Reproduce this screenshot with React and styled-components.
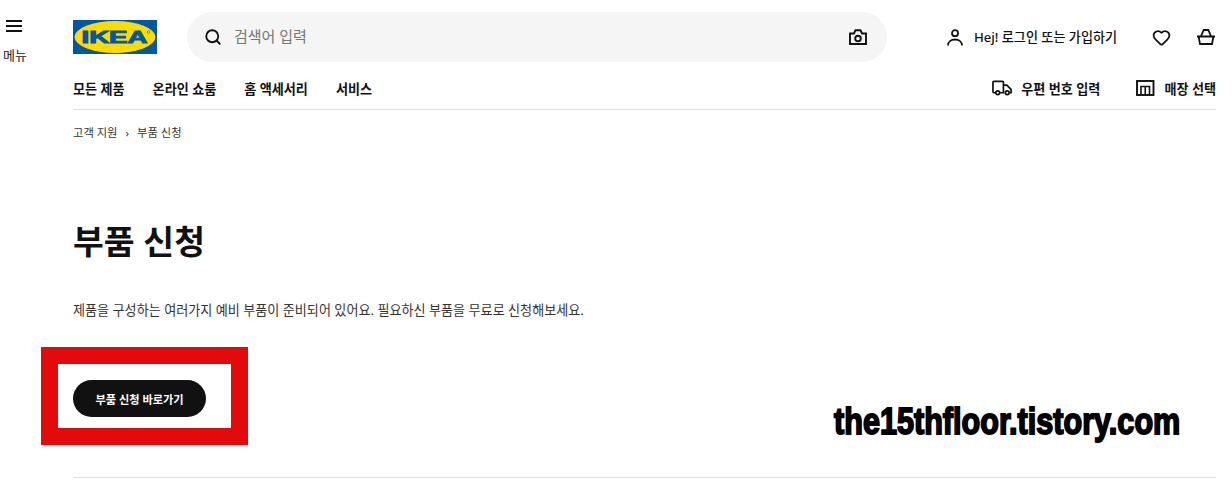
import React from 'react';
import styled, { createGlobalStyle } from 'styled-components';
import { Search, Heart } from 'lucide-react';

const GlobalStyle = createGlobalStyle`
  html, body {
    margin: 0;
    padding: 0;
    background: #fff;
    overflow: hidden;
  }
  body {
    font-family: "Noto Sans", "Noto Sans CJK KR", sans-serif;
    color: #111;
  }
`;

const Page = styled.div`
  width: 1216px;
  height: 480px;
  display: grid;
  grid-template-columns: 73px 1fr;
`;

const MenuColumn = styled.div`
  display: flex;
  flex-direction: column;
  padding: 19px 0 0 3px;
`;

const MenuIcon = styled.svg`
  width: 16px;
  height: 14px;
  margin-left: 3px;
`;

const MenuLabel = styled.span`
  margin-top: 13px;
  font-size: 13px;
  line-height: 18px;
  color: #222;
`;

const Content = styled.div`
  position: relative;
  display: flex;
  flex-direction: column;
`;

const TopRow = styled.div`
  display: flex;
  align-items: center;
  height: 50px;
  margin-top: 12px;
`;

const Logo = styled.svg`
  width: 84px;
  height: 34px;
  flex-shrink: 0;
  margin-top: -1px;
`;

const SearchBar = styled.div`
  width: 700px;
  height: 50px;
  margin-left: 30px;
  border-radius: 25px;
  background: #f5f5f5;
  display: flex;
  align-items: center;
  padding: 0 20px 0 17px;
  box-sizing: border-box;
`;

const Placeholder = styled.span`
  flex: 1;
  margin-left: 12px;
  padding-bottom: 4px;
  font-size: 15px;
  color: #767676;
`;

const Account = styled.div`
  display: flex;
  align-items: center;
  margin-left: 60px;
  font-size: 13.1px;
  font-weight: 500;
  white-space: nowrap;
`;

const AccountText = styled.span`
  margin-left: 11px;
  padding-bottom: 2px;
`;

const IconButton = styled.span`
  display: flex;
  margin-left: ${p => p.$gap}px;
`;

const NavRow = styled.div`
  display: flex;
  align-items: center;
  height: 48px;
  padding-top: 5px;
  border-bottom: 1px solid #dfdfdf;
  box-sizing: border-box;
`;

const NavLink = styled.span`
  font-size: 13.1px;
  font-weight: 700;
  margin-right: 28px;
  white-space: nowrap;
`;

const NavSpacer = styled.div`
  flex: 1;
`;

const NavTool = styled.span`
  display: flex;
  align-items: center;
  gap: 9px;
  margin-left: 36px;
  font-size: 13.1px;
  font-weight: 700;
  white-space: nowrap;
`;

const Breadcrumb = styled.div`
  display: flex;
  align-items: center;
  gap: 8px;
  height: 18px;
  margin-top: 13px;
  font-size: 11.3px;
  color: #333;
`;

const Title = styled.h1`
  margin: 75px 0 0;
  font-size: 33.5px;
  line-height: 50px;
  font-weight: 700;
  color: #111;
`;

const Lead = styled.p`
  margin: 34px 0 0;
  font-size: 13.1px;
  line-height: 20px;
  color: #333;
`;

const Highlight = styled.div`
  width: 207px;
  height: 98px;
  margin: 27px 0 0 -32px;
  border: 17px solid #e20a0a;
  box-sizing: border-box;
  padding: 16px 0 0 15px;
`;

const Button = styled.div`
  width: 133px;
  height: 37px;
  border-radius: 19px;
  background: #111;
  color: #fff;
  font-size: 11.2px;
  font-weight: 700;
  display: flex;
  align-items: center;
  justify-content: center;
  white-space: nowrap;
`;

const Divider = styled.div`
  height: 1px;
  background: #dfdfdf;
  margin-top: 32px;
`;

const Watermark = styled.div`
  position: absolute;
  left: 761px;
  top: 400px;
  font-family: "Liberation Sans", sans-serif;
  font-size: 36px;
  line-height: 44px;
  font-weight: 700;
  color: #000;
  -webkit-text-stroke: 1.8px #000;
  white-space: nowrap;
  transform: scaleX(0.85);
  transform-origin: left center;
`;

const CameraIcon = () => (
  <svg width="18" height="16" viewBox="0 0 18 16" fill="none" stroke="#111" strokeWidth="1.9">
    <path d="M1 4.5h4L6.5 1.2h5L13 4.5h4V15H1z" />
    <circle cx="9" cy="9.5" r="2.8" />
  </svg>
);

const UserIcon = () => (
  <svg width="16" height="17" viewBox="0 0 16 17" fill="none" stroke="#111" strokeWidth="1.8">
    <circle cx="8" cy="4.2" r="3" />
    <path d="M1 16.5c0-3.8 3-6 7-6s7 2.2 7 6" />
  </svg>
);

const BasketIcon = () => (
  <svg width="18" height="16" viewBox="0 0 18 16" fill="none" stroke="#111" strokeWidth="1.8">
    <path d="M0 7.5h18M3.800 7.5 6.700 1h4.600l2.900 6.500M1.600 7.5 3 15h12l1.400-7.500" />
  </svg>
);

const TruckIcon = () => (
  <svg width="20" height="16" viewBox="0 0 21 16" fill="none" stroke="#111" strokeWidth="1.8">
    <path d="M3.500 13H2a1 1 0 0 1-1-1V2a1 1 0 0 1 1-1h9a1 1 0 0 1 1 1v11H8.500" />
    <path d="M12 5h3.500l4.500 4.500V13h-1.500" />
    <circle cx="6" cy="13" r="2" />
    <circle cx="16" cy="13" r="2" />
  </svg>
);

const StoreIcon = () => (
  <svg width="19" height="16" viewBox="0 0 19 16" fill="none" stroke="#111" strokeWidth="1.9">
    <rect x="1" y="1" width="16.5" height="14" />
    <path d="M5 15V6.500h8.500V15M9.250 6.500V15" strokeWidth="1.6" />
  </svg>
);

const App = () => {
  return (
    <>
      <GlobalStyle />
      <Page>
        <MenuColumn>
          <MenuIcon viewBox="0 0 16 14" fill="none" stroke="#111" strokeWidth="2">
            <path d="M0 2h16M0 7h16M0 12h16" />
          </MenuIcon>
          <MenuLabel>메뉴</MenuLabel>
        </MenuColumn>

        <Content>
          <TopRow>
            <Logo viewBox="0 0 84 34">
              <rect width="84" height="34" fill="#0058a3" />
              <ellipse cx="42" cy="17" rx="40.5" ry="16" fill="#ffdb00" />
              <text
                x="8.5"
                y="23"
                textLength="66"
                lengthAdjust="spacingAndGlyphs"
                fontFamily="'Liberation Sans', sans-serif"
                fontWeight="700"
                fontSize="17"
                fill="#0058a3"
                stroke="#0058a3"
                strokeWidth="1"
              >
                IKEA
              </text>
              <circle cx="75.5" cy="12" r="1.3" fill="none" stroke="#0058a3" strokeWidth="0.5" />
            </Logo>

            <SearchBar>
              <Search size={18} color="#111" strokeWidth={2.4} />
              <Placeholder>검색어 입력</Placeholder>
              <CameraIcon />
            </SearchBar>

            <Account>
              <UserIcon />
              <AccountText>Hej! 로그인 또는 가입하기</AccountText>
            </Account>
            <IconButton $gap={35}>
              <Heart size={19} color="#111" strokeWidth={2.2} />
            </IconButton>
            <IconButton $gap={26}>
              <BasketIcon />
            </IconButton>
          </TopRow>

          <NavRow>
            <NavLink>모든 제품</NavLink>
            <NavLink>온라인 쇼룸</NavLink>
            <NavLink>홈 액세서리</NavLink>
            <NavLink>서비스</NavLink>
            <NavSpacer />
            <NavTool>
              <TruckIcon />
              우편 번호 입력
            </NavTool>
            <NavTool>
              <StoreIcon />
              매장 선택
            </NavTool>
          </NavRow>

          <Breadcrumb>
            <span>고객 지원</span>
            <span>›</span>
            <span>부품 신청</span>
          </Breadcrumb>

          <Title>부품 신청</Title>
          <Lead>제품을 구성하는 여러가지 예비 부품이 준비되어 있어요. 필요하신 부품을 무료로 신청해보세요.</Lead>

          <Highlight>
            <Button>부품 신청 바로가기</Button>
          </Highlight>

          <Divider />
          <Watermark>the15thfloor.tistory.com</Watermark>
        </Content>
      </Page>
    </>
  );
};

export default App;
